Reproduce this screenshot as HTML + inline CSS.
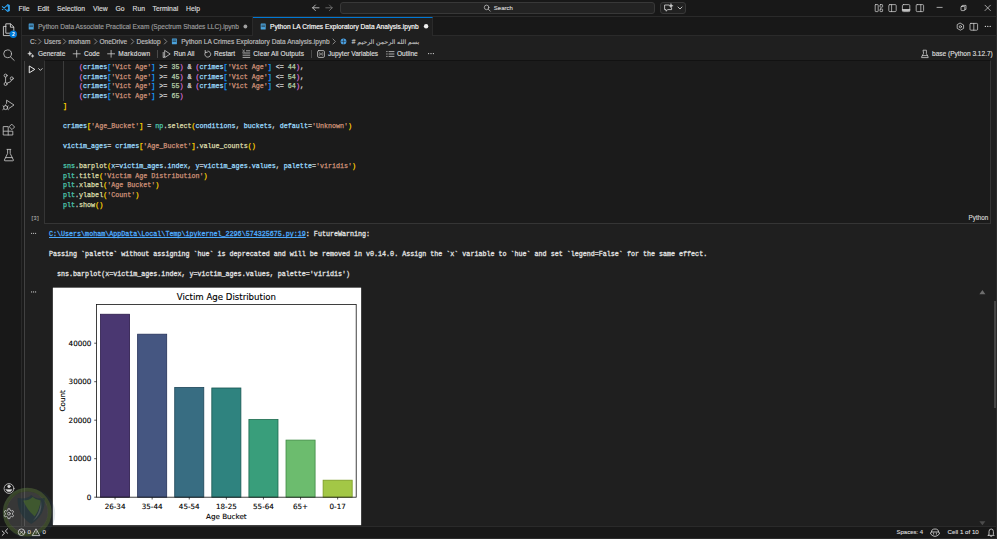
<!DOCTYPE html>
<html lang="en">
<head>
<meta charset="utf-8">
<title>Python LA Crimes Exploratory Data Analysis.ipynb - Visual Studio Code</title>
<style>
*{box-sizing:border-box;margin:0;padding:0}
html,body{width:1000px;height:541px;overflow:hidden;background:#fff}
body{font-family:"Liberation Sans","DejaVu Sans",sans-serif;font-size:6.7px;color:#ccc;position:relative;-webkit-font-smoothing:antialiased}
#app{position:absolute;left:0;top:0;width:997px;height:539px;background:#1f1f1f;overflow:hidden;border-right:1px solid #2b2b2b;border-bottom:1px solid #2b2b2b}
.abs{position:absolute}
.t{position:absolute;white-space:nowrap;line-height:10px;height:10px}
/* title bar */
#titlebar{position:absolute;left:0;top:0;width:997px;height:17px;background:#181818;border-bottom:1px solid #2a2a2a}
#titlebar .t{top:3.5px;color:#dcdcdc;font-size:6.8px;-webkit-text-stroke:0.15px}
#searchbox{position:absolute;left:340.2px;top:1.7px;width:314.4px;height:12.2px;background:#232323;border:1px solid #383838;border-radius:3px}
#copilotbox{position:absolute;left:660.2px;top:1.5px;width:25.8px;height:12.5px;background:#212121;border:1px solid #383838;border-radius:3px}
/* activity bar */
#activity{position:absolute;left:0;top:17px;width:22px;height:509px;background:#181818;border-right:1px solid #2a2a2a}
/* tabs */
#tabs{position:absolute;left:22px;top:17px;width:975px;height:18.5px;background:#181818;border-bottom:1px solid #2a2a2a}
#tab1{position:absolute;left:0;top:0;width:231px;height:18.5px;border-right:1px solid #2a2a2a}
#tab2{position:absolute;left:231px;top:0;width:180px;height:18.5px;background:#1f1f1f;border-top:1px solid #0078d4;border-right:1px solid #2a2a2a}
#tabs .t{top:4.6px;font-size:6.55px;-webkit-text-stroke:0.15px}
/* breadcrumb + toolbar */
#crumbs{position:absolute;left:22px;top:35.5px;width:975px;height:12px}
#crumbs .t{top:1.3px;color:#bcbcbc;font-size:6.55px;-webkit-text-stroke:0.18px}
#toolbar{position:absolute;left:22px;top:47.5px;width:975px;height:12.5px}
#toolbar .t{top:1.6px;color:#dcdcdc;font-size:6.55px;-webkit-text-stroke:0.15px}
.sep{position:absolute;top:2.5px;width:1px;height:8px;background:#4a4a4a}
/* notebook */
#nb{position:absolute;left:22px;top:60px;width:975px;height:466px;background:#1f1f1f}
#cell{position:absolute;left:22px;top:0;width:947px;height:164px;background:#1b1b1b;border:1px solid #353535;border-top-color:#121212}
.mono{font-family:"Liberation Mono","DejaVu Sans Mono",monospace;font-size:6.7px}
.cl{-webkit-text-stroke:0.25px;position:absolute;left:41px;white-space:pre;line-height:10px;height:10px;color:#d4d4d4;font-family:"Liberation Mono","DejaVu Sans Mono",monospace;font-size:6.7px}
.ol{-webkit-text-stroke:0.28px;position:absolute;left:27px;white-space:pre;line-height:10px;height:10px;color:#e2e2e2;font-family:"Liberation Mono","DejaVu Sans Mono",monospace;font-size:6.7px}
.v{color:#9cdcfe}.s{color:#ce9178}.n{color:#b5cea8}.f{color:#dcdcaa}.m{color:#4ec9b0}
.b1{color:#ffd700}.b2{color:#da70d6}.b3{color:#179fff}
a.lnk{color:#4daafc;text-decoration:underline;text-decoration-thickness:0.5px;text-underline-offset:0.6px}
/* status bar */
#status{position:absolute;left:0;top:526px;width:997px;height:12px;background:#181818;border-top:1px solid #2a2a2a}
#status .t{z-index:2;top:0.4px;color:#dcdcdc;font-size:6px;-webkit-text-stroke:0.12px}
svg{position:absolute;overflow:visible}
</style>
</head>
<body>
<div id="app">

<!-- TITLE BAR -->
<div id="titlebar">
  <span class="t" style="left:18.5px">File</span>
  <span class="t" style="left:37.5px">Edit</span>
  <span class="t" style="left:57px">Selection</span>
  <span class="t" style="left:93px">View</span>
  <span class="t" style="left:115.5px">Go</span>
  <span class="t" style="left:132.5px">Run</span>
  <span class="t" style="left:152.5px">Terminal</span>
  <span class="t" style="left:186px">Help</span>
  <div id="searchbox"></div>
  <span class="t" style="left:493.8px;top:2.6px;font-size:6px;color:#d4d4d4">Search</span>
  <div id="copilotbox"></div>
</div>

<!-- ACTIVITY BAR -->
<div id="activity"><span class="t" style="left:11.9px;top:12.3px;font-size:5px;color:#fff;font-weight:bold;z-index:3">2</span></div>

<!-- TABS -->
<div id="tabs">
  <div id="tab1">
    <span class="t" style="left:16px;color:#9d9d9d">Python Data Associate Practical Exam (Spectrum Shades LLC).ipynb</span>
  </div>
  <div id="tab2">
    <span class="t" style="left:17px;top:3.6px;color:#fff;letter-spacing:0.05px">Python LA Crimes Exploratory Data Analysis.ipynb</span>
  </div>
</div>

<!-- BREADCRUMBS -->
<div id="crumbs">
  <span class="t" style="left:8px">C:</span>
  <span class="t" style="left:22px">Users</span>
  <span class="t" style="left:46.5px">moham</span>
  <span class="t" style="left:77.5px">OneDrive</span>
  <span class="t" style="left:114.5px">Desktop</span>
  <span class="t" style="left:159.2px;letter-spacing:0.045px">Python LA Crimes Exploratory Data Analysis.ipynb</span>
  <span class="t" style="left:329.8px;font-family:'Liberation Sans','DejaVu Sans',sans-serif"># <span style="font-size:6.25px">بسم الله الرحمن الرحيم</span></span>
</div>

<!-- TOOLBAR -->
<div id="toolbar">
  <span class="t" style="left:16px">Generate</span>
  <span class="t" style="left:62px">Code</span>
  <span class="t" style="left:96.2px;letter-spacing:0.25px">Markdown</span>
  <div class="sep" style="left:135px"></div>
  <span class="t" style="left:151.7px">Run All</span>
  <span class="t" style="left:192px">Restart</span>
  <span class="t" style="left:231.3px;letter-spacing:0.1px">Clear All Outputs</span>
  <div class="sep" style="left:289px"></div>
  <span class="t" style="left:306px">Jupyter Variables</span>
  <span class="t" style="left:375px">Outline</span>
  <span class="t" style="left:910px">base (Python 3.12.7)</span>
</div>

<!-- NOTEBOOK -->
<div id="nb">
  <div class="abs" style="left:1.8px;top:0.6px;width:1px;height:466px;background:#414141"></div>
  <div class="abs" style="left:0;top:0;width:1.8px;height:466.5px;background:#1a1a1a"></div>
  <div id="cell">
    <div class="abs" style="left:18px;top:0;width:1px;height:40px;background:#3c3c3c"></div>
  </div>
  <div class="cl" style="top:1.6px">    <span class="b2">(</span><span class="v">crimes</span><span class="b3">[</span><span class="s">'Vict Age'</span><span class="b3">]</span> &gt;= <span class="n">35</span><span class="b2">)</span> &amp; <span class="b2">(</span><span class="v">crimes</span><span class="b3">[</span><span class="s">'Vict Age'</span><span class="b3">]</span> &lt;= <span class="n">44</span><span class="b2">)</span>,</div>
  <div class="cl" style="top:11.5px">    <span class="b2">(</span><span class="v">crimes</span><span class="b3">[</span><span class="s">'Vict Age'</span><span class="b3">]</span> &gt;= <span class="n">45</span><span class="b2">)</span> &amp; <span class="b2">(</span><span class="v">crimes</span><span class="b3">[</span><span class="s">'Vict Age'</span><span class="b3">]</span> &lt;= <span class="n">54</span><span class="b2">)</span>,</div>
  <div class="cl" style="top:21.4px">    <span class="b2">(</span><span class="v">crimes</span><span class="b3">[</span><span class="s">'Vict Age'</span><span class="b3">]</span> &gt;= <span class="n">55</span><span class="b2">)</span> &amp; <span class="b2">(</span><span class="v">crimes</span><span class="b3">[</span><span class="s">'Vict Age'</span><span class="b3">]</span> &lt;= <span class="n">64</span><span class="b2">)</span>,</div>
  <div class="cl" style="top:31.3px">    <span class="b2">(</span><span class="v">crimes</span><span class="b3">[</span><span class="s">'Vict Age'</span><span class="b3">]</span> &gt;= <span class="n">65</span><span class="b2">)</span></div>
  <div class="cl" style="top:41.2px"><span class="b1">]</span></div>
  <div class="cl" style="top:61px"><span class="v">crimes</span><span class="b1">[</span><span class="s">'Age_Bucket'</span><span class="b1">]</span> = <span class="m">np</span>.<span class="f">select</span><span class="b1">(</span><span class="v">conditions</span>, <span class="v">buckets</span>, <span class="v">default</span>=<span class="s">'Unknown'</span><span class="b1">)</span></div>
  <div class="cl" style="top:80.8px"><span class="v">victim_ages</span>= <span class="v">crimes</span><span class="b1">[</span><span class="s">'Age_Bucket'</span><span class="b1">]</span>.<span class="f">value_counts</span><span class="b1">()</span></div>
  <div class="cl" style="top:100.6px"><span class="m">sns</span>.<span class="f">barplot</span><span class="b1">(</span><span class="v">x</span>=<span class="v">victim_ages</span>.<span class="v">index</span>, <span class="v">y</span>=<span class="v">victim_ages</span>.<span class="v">values</span>, <span class="v">palette</span>=<span class="s">'viridis'</span><span class="b1">)</span></div>
  <div class="cl" style="top:110.5px"><span class="m">plt</span>.<span class="f">title</span><span class="b1">(</span><span class="s">'Victim Age Distribution'</span><span class="b1">)</span></div>
  <div class="cl" style="top:120.4px"><span class="m">plt</span>.<span class="f">xlabel</span><span class="b1">(</span><span class="s">'Age Bucket'</span><span class="b1">)</span></div>
  <div class="cl" style="top:130.3px"><span class="m">plt</span>.<span class="f">ylabel</span><span class="b1">(</span><span class="s">'Count'</span><span class="b1">)</span></div>
  <div class="cl" style="top:140.2px"><span class="m">plt</span>.<span class="f">show</span><span class="b1">()</span></div>

  <span class="t mono" style="left:9px;top:153.9px;font-size:4.6px;color:#a8a8a8;-webkit-text-stroke:0.15px">[3]</span>
  <span class="t" style="left:946.6px;top:152.9px;font-size:6.3px;color:#dcdcdc;-webkit-text-stroke:0.12px">Python</span>

  <div class="ol" style="top:169px"><a class="lnk">C:\Users\moham\AppData\Local\Temp\ipykernel_2296\574325675.py:19</a>: FutureWarning: </div>
  <div class="ol" style="top:189px">Passing `palette` without assigning `hue` is deprecated and will be removed in v0.14.0. Assign the `x` variable to `hue` and set `legend=False` for the same effect.</div>
  <div class="ol" style="top:209px">  sns.barplot(x=victim_ages.index, y=victim_ages.values, palette='viridis')</div>

</div>

<div class="abs" style="left:994px;top:301px;width:2.6px;height:107px;background:#454545"></div>

<!-- STATUS BAR -->
<div id="status">
  <span class="t" style="left:27.4px">0</span>
  <span class="t" style="left:42.4px">0</span>
  <span class="t" style="left:896.5px">Spaces: 4</span>
  <span class="t" style="left:947.5px;font-size:6.2px">Cell 1 of 10</span>
</div>


<!-- CHART -->
<svg id="chartsvg" width="996.6" height="538.4" viewBox="0 0 996.6 538.4" style="left:0;top:0" font-family="'DejaVu Sans','Liberation Sans',sans-serif" font-size="7.19" fill="#000" stroke="#000" stroke-width="0.12">
  <rect x="52.8" y="287.6" width="308.4" height="237.6" fill="#ffffff"/>
  <rect x="100.51" y="314.25" width="29.08" height="182.95" fill="#4a3771" stroke="#2a1a4a" stroke-width="0.8"/>
  <rect x="137.61" y="334.20" width="29.08" height="163.00" fill="#455681" stroke="#25325a" stroke-width="0.8"/>
  <rect x="174.71" y="387.40" width="29.08" height="109.80" fill="#386d82" stroke="#1f4658" stroke-width="0.8"/>
  <rect x="211.81" y="388.00" width="29.08" height="109.20" fill="#2f837f" stroke="#185652" stroke-width="0.8"/>
  <rect x="248.91" y="419.40" width="29.08" height="77.80" fill="#399e7b" stroke="#1f6b50" stroke-width="0.8"/>
  <rect x="286.01" y="440.10" width="29.08" height="57.10" fill="#6cbc6e" stroke="#3f8a44" stroke-width="0.8"/>
  <rect x="323.11" y="480.20" width="29.08" height="17.00" fill="#a3c746" stroke="#7a9a22" stroke-width="0.8"/>
  <rect x="96.5" y="304.5" width="259.70" height="192.70" fill="none" stroke="#111" stroke-width="0.8"/>
  <path d="M94.20 497.20 H96.5" stroke="#111" stroke-width="0.7"/>
  <text x="91.40" y="499.85" text-anchor="end">0</text>
  <path d="M94.20 458.70 H96.5" stroke="#111" stroke-width="0.7"/>
  <text x="91.40" y="461.35" text-anchor="end">10000</text>
  <path d="M94.20 420.20 H96.5" stroke="#111" stroke-width="0.7"/>
  <text x="91.40" y="422.85" text-anchor="end">20000</text>
  <path d="M94.20 381.70 H96.5" stroke="#111" stroke-width="0.7"/>
  <text x="91.40" y="384.35" text-anchor="end">30000</text>
  <path d="M94.20 343.20 H96.5" stroke="#111" stroke-width="0.7"/>
  <text x="91.40" y="345.85" text-anchor="end">40000</text>
  <path d="M115.05 497.2 V499.50" stroke="#111" stroke-width="0.7"/>
  <text x="115.05" y="508.7" text-anchor="middle">26-34</text>
  <path d="M152.15 497.2 V499.50" stroke="#111" stroke-width="0.7"/>
  <text x="152.15" y="508.7" text-anchor="middle">35-44</text>
  <path d="M189.25 497.2 V499.50" stroke="#111" stroke-width="0.7"/>
  <text x="189.25" y="508.7" text-anchor="middle">45-54</text>
  <path d="M226.35 497.2 V499.50" stroke="#111" stroke-width="0.7"/>
  <text x="226.35" y="508.7" text-anchor="middle">18-25</text>
  <path d="M263.45 497.2 V499.50" stroke="#111" stroke-width="0.7"/>
  <text x="263.45" y="508.7" text-anchor="middle">55-64</text>
  <path d="M300.55 497.2 V499.50" stroke="#111" stroke-width="0.7"/>
  <text x="300.55" y="508.7" text-anchor="middle">65+</text>
  <path d="M337.65 497.2 V499.50" stroke="#111" stroke-width="0.7"/>
  <text x="337.65" y="508.7" text-anchor="middle">0-17</text>
  <text x="226.35" y="518.9" text-anchor="middle">Age Bucket</text>
  <text transform="translate(64.6,400.85) rotate(-90)" text-anchor="middle">Count</text>
  <text x="226.35" y="300" text-anchor="middle" font-size="8.63">Victim Age Distribution</text>
</svg>

<!-- ICON OVERLAY (page pixel coordinates) -->
<svg id="icons" width="997" height="538.5" viewBox="0 0 997 538.5" style="left:0;top:0;pointer-events:none;z-index:2" fill="none" stroke="#d8d8d8" stroke-width="0.85" stroke-linecap="round" stroke-linejoin="round">
  <!-- vscode logo -->
  <g transform="translate(1.5,3.8) scale(0.085)" stroke="none" fill="#2ea3f2">
    <path d="M70 3 L98 15 V85 L70 97 Z"/>
    <path d="M72 12 L10 68 M72 88 L10 32" stroke="#2ea3f2" stroke-width="12" stroke-linecap="round" fill="none"/>
    <path d="M77 31 V69 L53 50 Z" fill="#181818"/>
  </g>
  <!-- nav arrows -->
  <g stroke="#d8d8d8" stroke-width="0.8"><path d="M319 7.8 H312.6 M315.4 5 L312.6 7.8 L315.4 10.6"/></g>
  <g stroke="#7a7a7a" stroke-width="0.8"><path d="M325.8 7.8 H332.2 M329.4 5 L332.2 7.8 L329.4 10.6"/></g>
  <!-- search icon -->
  <g stroke="#cfcfcf" stroke-width="0.7"><circle cx="486.6" cy="7.4" r="2.3"/><path d="M488.3 9.2 L490.3 11.2"/></g>
  <!-- copilot chat icon + chevron -->
  <g stroke="#e0e0e0" stroke-width="0.8"><path d="M669 5 H664.6 V9.6 H666 V11.2 L667.8 9.6 H671.6 V8"/><path d="M671 3.6 L671.6 5.2 L673.2 5.8 L671.6 6.4 L671 8 L670.4 6.4 L668.8 5.8 L670.4 5.2 Z" fill="#e0e0e0" stroke-width="0.3"/><path d="M678 7 L680 9 L682 7"/></g>
  <!-- layout icons -->
  <g stroke="#cfcfcf" stroke-width="0.75">
    <rect x="875.2" y="4.6" width="3" height="7" rx="0.5"/><rect x="880" y="4.6" width="2.6" height="2.6" rx="0.5"/><rect x="880" y="9" width="2.6" height="2.6" rx="0.5"/>
    <rect x="888.8" y="4.6" width="7.4" height="7" rx="1"/><path d="M891.6 4.6 V11.6"/>
    <rect x="902.4" y="4.6" width="7.4" height="7" rx="1"/><path d="M902.4 9.6 H909.8 M902.8 10.6 H909.4" stroke-width="1"/>
    <rect x="916.2" y="4.6" width="7.4" height="7" rx="1"/><path d="M920.8 4.6 V11.6"/>
  </g>
  <!-- window controls -->
  <g stroke="#e0e0e0" stroke-width="0.7">
    <path d="M937 7.4 H942.2"/>
    <rect x="961" y="6.4" width="3.8" height="4.2" rx="0.6"/><path d="M962.4 6.2 V5.4 H966 V9.4 H965"/>
    <path d="M985 5.2 L990.4 10.6 M990.4 5.2 L985 10.6"/>
  </g>
  <!-- tab action icons -->
  <g stroke="#d8d8d8" stroke-width="0.75">
    <path d="M960.4 23.2 L963.6 25 V28.4 L960.4 30.2 L957.2 28.4 V25 Z"/><circle cx="960.4" cy="26.7" r="1.1"/>
    <rect x="970" y="23.4" width="7.6" height="6.8" rx="0.9"/><path d="M973.8 23.4 V30.2"/>
  </g>
  <g fill="#d8d8d8" stroke="none"><circle cx="985.4" cy="26.4" r="0.65"/><circle cx="987.8" cy="26.4" r="0.65"/><circle cx="990.2" cy="26.4" r="0.65"/></g>

  <!-- tab icons (notebook) -->
  <g stroke="none" fill="#4ba3dd">
    <path d="M29.2 23.6 h4 a0.5 0.5 0 0 1 .5 .5 v4.8 a0.5 0.5 0 0 1 -.5 .5 h-4 a0.5 0.5 0 0 1 -.5 -.5 v-4.8 a0.5 0.5 0 0 1 .5 -.5 Z"/>
    <path d="M261.2 23.6 h4 a0.5 0.5 0 0 1 .5 .5 v4.8 a0.5 0.5 0 0 1 -.5 .5 h-4 a0.5 0.5 0 0 1 -.5 -.5 v-4.8 a0.5 0.5 0 0 1 .5 -.5 Z"/>
    <path d="M172.4 38.4 h4 a0.5 0.5 0 0 1 .5 .5 v4.8 a0.5 0.5 0 0 1 -.5 .5 h-4 a0.5 0.5 0 0 1 -.5 -.5 v-4.8 a0.5 0.5 0 0 1 .5 -.5 Z"/>
  </g>
  <g stroke="#181818" stroke-width="0.6"><path d="M29.8 25.2 H32.6 M29.8 26.6 H32.6"/><path d="M172.9 40 H175.8 M172.9 41.4 H175.8"/></g>
  <g stroke="#1f1f1f" stroke-width="0.6"><path d="M261.8 25.2 H264.6 M261.8 26.6 H264.6"/></g>
  <!-- tab dirty dots -->
  <circle cx="245.4" cy="26.5" r="1.9" fill="#a0a0a0" stroke="none"/>
  <circle cx="426.1" cy="26.3" r="2.2" fill="#f0f0f0" stroke="none"/>
  <!-- breadcrumb chevrons -->
  <g stroke="#a8a8a8" stroke-width="0.75">
    <path d="M38.6 39 L41 41.5 L38.6 44"/><path d="M63.4 39 L65.8 41.5 L63.4 44"/><path d="M94.6 39 L97 41.5 L94.6 44"/>
    <path d="M131.4 39 L133.8 41.5 L131.4 44"/><path d="M164.4 39 L166.8 41.5 L164.4 44"/><path d="M333 39 L335.4 41.5 L333 44"/>
  </g>
  <!-- breadcrumb symbol icon (python) -->
  <g stroke="none" fill="#4a9fe0"><circle cx="343.5" cy="41.4" r="2.9"/></g>
  <g stroke="#1f1f1f" stroke-width="0.5"><path d="M341.6 41.4 H345.4 M343.5 39.4 V43.4"/></g>
  <!-- toolbar icons -->
  <g stroke="#d8d8d8" stroke-width="0.75">
    <!-- sparkle / generate -->
    <path d="M29.8 51.4 L30.5 52.9 L32 53.6 L30.5 54.3 L29.8 55.8 L29.1 54.3 L27.6 53.6 L29.1 52.9 Z" fill="#d8d8d8" stroke-width="0.3"/>
    <path d="M32.6 54.6 L33.1 55.6 L34.1 56.1 L33.1 56.6 L32.6 57.6 L32.1 56.6 L31.1 56.1 L32.1 55.6 Z" fill="#d8d8d8" stroke-width="0.3"/>
    <!-- plus icons -->
    <path d="M73.2 53.8 H80.2 M76.7 50.4 V57.2"/>
    <path d="M107.6 53.8 H114.6 M111.1 50.4 V57.2"/>
    <!-- run all -->
    <path d="M165 50.6 L170.2 54 L165 57.4 Z"/><path d="M163.2 52.4 V57.6 L164.4 56.8"/>
    <!-- restart -->
    <path d="M205.6 52 A3 3 0 1 0 207.8 51.1"/><path d="M205.2 50.4 V52.4 H207.2"/>
    <!-- clear all -->
    <path d="M243 53 H249.8 M243 55.2 H249.8 M243 57.4 H249.8 M246.4 50.8 H249.8"/><path d="M242.6 50 L244.6 52 M244.6 50 L242.6 52" stroke-width="0.55"/>
    <!-- jupyter variables -->
    <rect x="317.6" y="50.6" width="6.8" height="6.8" rx="1.2"/>
    <!-- outline -->
    <path d="M389 51.6 H394 M389 54 H394 M389 56.4 H394"/><path d="M386.6 51.6 H387.2 M386.6 54 H387.2 M386.6 56.4 H387.2"/>
    <!-- kernel icon -->
    <path d="M923.4 50.2 H926.4 V53.6 L928.2 57 V57.6 H921.6 V57 L923.4 53.6 Z"/><path d="M922.4 55.6 H927.4"/>
  </g>
  <g fill="#d8d8d8" stroke="none"><circle cx="428.6" cy="53.6" r="0.65"/><circle cx="431" cy="53.6" r="0.65"/><circle cx="433.4" cy="53.6" r="0.65"/></g>
  <g stroke="#d8d8d8" stroke-width="0.45"><path d="M319.4 52.6 Q318.6 54 319.4 55.4 M322.6 52.6 Q323.4 54 322.6 55.4 M320.3 53.1 L321.7 54.9 M321.7 53.1 L320.3 54.9"/></g>

  <!-- ACTIVITY BAR ICONS -->
  <g stroke="#dcdcdc" stroke-width="0.85">
    <!-- explorer -->
    <path d="M6.2 23.8 H10.6 L13.8 27 V33.2 H6.2 Z"/><path d="M10.4 24 V27.2 H13.6"/><path d="M6 26.4 H3.4 V35.6 H10.4 V33.4"/>
  </g>
  <circle cx="13.3" cy="34.3" r="3.7" fill="#0078d4" stroke="none"/>
  <g stroke="#c4c4c4" stroke-width="0.85">
    <!-- search -->
    <circle cx="7.6" cy="53.8" r="3.9"/><path d="M10.4 56.8 L14.2 60.4"/>
    <!-- source control -->
    <circle cx="5.6" cy="75.6" r="1.5"/><circle cx="5.6" cy="84" r="1.5"/><circle cx="11.8" cy="78.4" r="1.5"/><path d="M5.6 77.2 V82.4 M11.8 80 Q11.6 82.2 7.2 83.2"/>
    <!-- run and debug -->
    <path d="M6.6 103.4 V100.2 L14 105 L9 108.4"/><circle cx="5.6" cy="107.6" r="2"/><path d="M3 106 L3.9 106.6 M2.8 109.6 L3.8 108.8 M8.2 106 L7.3 106.6 M8.4 109.6 L7.4 108.8 M5.6 105.6 V104.8"/>
    <!-- extensions -->
    <path d="M3.6 126.6 H8.2 V131.2 H12.8 V135 H3.6 Z M3.6 131.2 H8.2 V135"/><path d="M12 124.4 L14.6 127 L12 129.6 L9.4 127 Z"/>
    <!-- testing flask -->
    <path d="M7 149.4 H10.8 M7.6 149.6 V153.4 L4.4 160 Q4.2 160.8 5 160.8 H12.8 Q13.6 160.8 13.4 160 L10.2 153.4 V149.6"/><path d="M5.6 157.6 H12.2"/>
    <!-- account -->
    <circle cx="9" cy="488.5" r="4.9"/><circle cx="9" cy="486.4" r="1.3" fill="#dcdcdc"/><path d="M6 489.4 H12 Q11.6 491.8 9 491.8 Q6.4 491.8 6 489.4 Z" fill="#dcdcdc" stroke-width="0.4"/>
    <!-- settings gear -->
    <circle cx="8.9" cy="513.7" r="1.4"/>
    <path d="M7.82 510.16 L7.95 508.79 L9.85 508.79 L9.98 510.16 L11.42 510.99 L12.67 510.42 L13.63 512.07 L12.51 512.87 L12.51 514.53 L13.63 515.33 L12.67 516.98 L11.42 516.41 L9.98 517.24 L9.85 518.61 L7.95 518.61 L7.82 517.24 L6.38 516.41 L5.13 516.98 L4.17 515.33 L5.29 514.53 L5.29 512.87 L4.17 512.07 L5.13 510.42 L6.38 510.99 Z"/>
  </g>
  <!-- CELL GUTTER ICONS -->
  <g stroke="#ededed" stroke-width="1">
    <path d="M29.6 66.2 L34.8 69.4 L29.6 72.6 Z"/><path d="M38.6 68.6 L40.4 70.4 L42.2 68.6" stroke="#c0c0c0"/>
  </g>
  <g fill="#c8c8c8" stroke="none">
    <circle cx="31.6" cy="233.3" r="0.6"/><circle cx="33.6" cy="233.3" r="0.6"/><circle cx="35.6" cy="233.3" r="0.6"/>
    <circle cx="31.6" cy="291.9" r="0.6"/><circle cx="33.6" cy="291.9" r="0.6"/><circle cx="35.6" cy="291.9" r="0.6"/>
    <path d="M979.4 294.2 L982.4 290 L985.4 294.2 Z" fill="#6e6e6e"/>
    <path d="M979.4 521.2 L982.4 525.2 L985.4 521.2 Z" fill="#4c4c4c"/>
  </g>
  <!-- STATUS BAR ICONS -->
  <g stroke="#dcdcdc" stroke-width="0.8">
    <path d="M2.2 531 L4.5 533.2 L2.2 535.4 M7.6 528.8 L5.3 531 L7.6 533.2" stroke="#e8e8e8" stroke-width="0.9"/>
    <circle cx="21.5" cy="532.2" r="3.3"/><path d="M20.1 530.8 L22.9 533.6 M22.9 530.8 L20.1 533.6"/>
    <path d="M36.2 529.2 L39.8 535.6 H32.6 Z"/><path d="M36.2 531.6 V533.4" stroke-width="0.6"/>
    <!-- copilot status -->
    <path d="M931.4 532 Q931.2 529 935 529 Q938.8 529 938.6 532 M931 532.2 Q930.4 532.6 930.6 534 Q933 536.4 935 536.4 Q937 536.4 939.4 534 Q939.6 532.6 939 532.2 Z"/><path d="M933.6 533 V534.2 M936.4 533 V534.2" stroke-width="0.7"/>
    <!-- bell -->
    <path d="M989 534.6 V531.6 Q989 529 991.2 529 Q993.4 529 993.4 531.6 V534.6 L994.2 535.4 H988.2 Z"/><path d="M990.4 536.4 Q991.2 537.2 992 536.4" stroke-width="0.6"/>
  </g>
</svg>
</div>
<!-- WATERMARK -->
<svg id="wm" width="1000" height="541" viewBox="0 0 1000 541" style="left:0;top:0;pointer-events:none;z-index:1">
  <g transform="translate(27.2,512.2)">
    <path fill-rule="evenodd" d="M-22.8 1.6 a25.4 25.4 0 1 0 50.8 0 a25.4 25.4 0 1 0 -50.8 0 Z M-24.2 0 a24.2 24.2 0 1 0 48.4 0 a24.2 24.2 0 1 0 -48.4 0 Z" fill="#2c4c6c" opacity="0.14"/>
    <circle r="22.5" fill="none" stroke="#6a8740" stroke-width="3.8" opacity="0.4"/>
    <circle r="20.8" fill="#939393" opacity="0.25"/>
    <g transform="translate(3,0.4)">
      <path d="M-12.5 -14.5 Q-3 -13 1 -17.5 Q5 -13 14.5 -14.5 Q15.5 2 1 11.5 Q-13.5 2 -12.5 -14.5 Z" fill="#16323c" opacity="0.5"/>
      <path d="M-7 -12 Q-1 -12 2.5 -15.5 Q5.5 -12.5 10.5 -12 Q9.5 -3 4.5 4 Q-3.5 -3 -7 -12 Z" fill="#557a22" opacity="0.5"/>
      <path d="M10.8 -11.6 Q13 1 2.5 8.5 Q9.5 1 10.8 -11.6 Z" fill="#9a9f9a" opacity="0.3"/>
    </g>
  </g>
</svg>
</body>
</html>
